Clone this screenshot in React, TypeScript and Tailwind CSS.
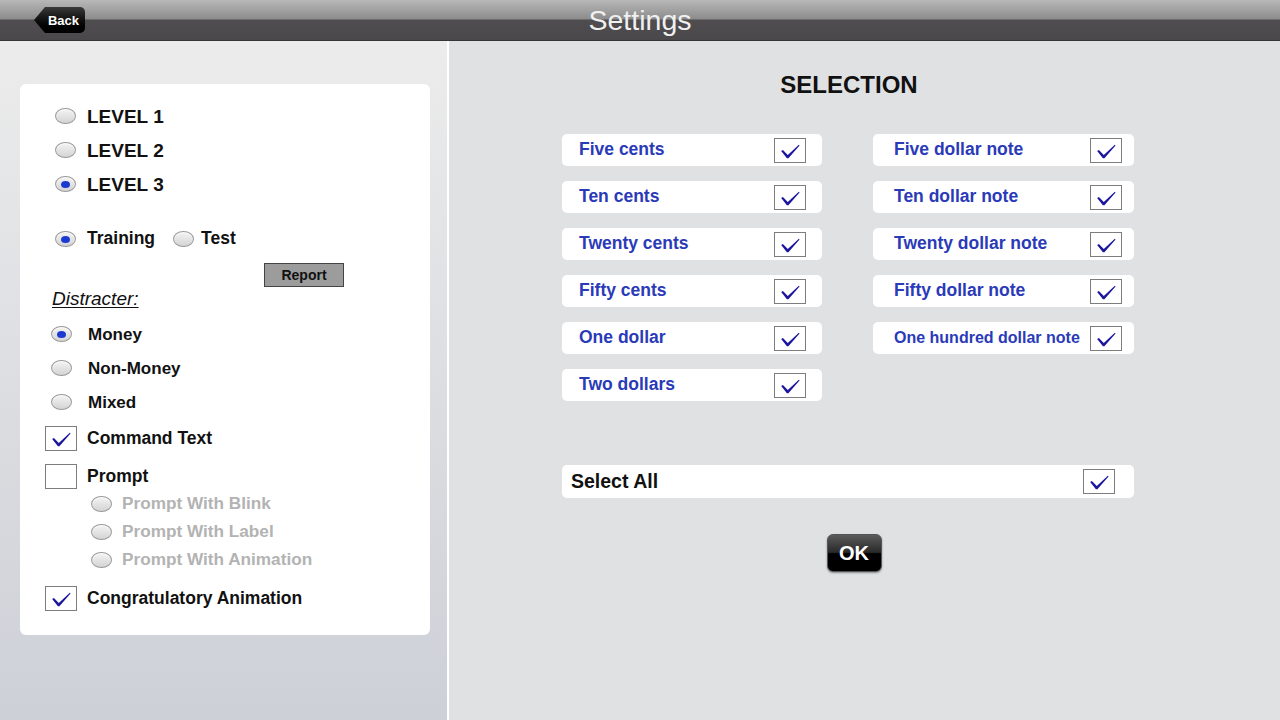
import type { ReactNode } from 'react';

const font = { fontFamily: '"Liberation Sans", Arial, sans-serif' };

const coins = ['Five cents', 'Ten cents', 'Twenty cents', 'Fifty cents', 'One dollar', 'Two dollars'];
const notes = [
  'Five dollar note',
  'Ten dollar note',
  'Twenty dollar note',
  'Fifty dollar note',
  'One hundred dollar note',
];

function Tick() {
  return (
    <svg viewBox="0 0 32 26" className="h-full w-full">
      <path d="M6 13.5 L8 12.5 L13.5 18 L26 6.5 L26.8 7.3 L14.2 21.8 L12.5 21.8 Z" fill="#1c169e" />
    </svg>
  );
}

function CheckBox({ checked }: { checked: boolean }) {
  return (
    <div className="h-[25px] w-[32px] shrink-0 border border-[#7d7d7d] bg-white">
      {checked ? <Tick /> : null}
    </div>
  );
}

function Radio({ selected }: { selected?: boolean }) {
  return (
    <div className="flex h-[16px] w-[21px] shrink-0 items-center justify-center rounded-[50%] border border-[#9a9a9a] bg-gradient-to-b from-[#f4f4f4] to-[#d4d4d4] shadow-[inset_0_1px_1px_rgba(255,255,255,0.9)]">
      {selected ? <div className="h-[7px] w-[9px] rounded-[50%] bg-[#1d3ad0]" /> : null}
    </div>
  );
}

function RadioRow({
  selected,
  children,
  className,
  gap = 'gap-[11px]',
  textClass = 'text-[17px] text-[#111]',
}: {
  selected?: boolean;
  children: ReactNode;
  className?: string;
  gap?: string;
  textClass?: string;
}) {
  return (
    <div className={`flex items-center leading-none ${gap} ${className ?? ''}`}>
      <Radio selected={selected} />
      <span className={`font-bold ${textClass}`}>{children}</span>
    </div>
  );
}

function ItemRow({ label, right, wide }: { label: string; right?: boolean; wide?: boolean }) {
  return (
    <div
      className={`flex h-[32px] items-center justify-between rounded-[5px] bg-white leading-none ${
        right ? 'pl-[21px] pr-[12px]' : 'pl-[17px] pr-[16px]'
      }`}
    >
      <span className={`font-bold text-[#2a3ab8] ${wide ? 'text-[16px]' : 'text-[17.5px]'}`}>{label}</span>
      <CheckBox checked />
    </div>
  );
}

export default function App() {
  return (
    <div className="flex h-[720px] w-[1280px] flex-col overflow-hidden" style={font}>
      {/* Header bar */}
      <header className="relative flex h-[41px] shrink-0 items-center justify-center border-b border-[#353535] bg-[linear-gradient(to_bottom,#b8b8b8_0px,#8c8c8c_19px,#4f4d4f_20px,#4a484a_40px)]">
        <button className="absolute left-[34px] top-[7px] flex h-[26px] w-[51px] items-center justify-end rounded-r-[5px] bg-gradient-to-b from-[#3a3a3a] to-[#000] pr-[6px] text-[13px] font-bold leading-none text-white [clip-path:polygon(11px_0,100%_0,100%_100%,11px_100%,0_50%)]">
          Back
        </button>
        <h1 className="text-[28.5px] leading-none text-[#f0f0f0]">Settings</h1>
      </header>

      <div className="flex flex-1">
        {/* Left pane */}
        <aside className="w-[449px] shrink-0 border-r-2 border-white bg-gradient-to-b from-[#ececec] to-[#cdd0d7] pl-[20px] pt-[43px]">
          <div className="h-[551px] w-[410px] rounded-[6px] bg-white pl-[25px] pt-[15px]">
            <div className="flex flex-col pl-[10px]">
              {['LEVEL 1', 'LEVEL 2', 'LEVEL 3'].map((lvl, i) => (
                <RadioRow key={lvl} selected={i === 2} className="h-[34px]" textClass="text-[19px] text-[#111]">
                  {lvl}
                </RadioRow>
              ))}
            </div>

            <div className="mt-[26px] flex h-[24px] items-center pl-[10px]">
              <RadioRow selected textClass="text-[17.5px] text-[#111]">
                Training
              </RadioRow>
              <RadioRow className="ml-[18px]" gap="gap-[7px]" textClass="text-[17.5px] text-[#111]">
                Test
              </RadioRow>
            </div>

            <div className="mt-[12px] flex pl-[219px]">
              <button className="h-[24px] w-[80px] border border-[#444] bg-[#9c9c9c] text-[14px] font-bold leading-none text-[#111]">
                Report
              </button>
            </div>

            <p className="flex h-[22px] items-center pl-[7px] text-[19px] italic leading-none text-[#111] underline underline-offset-2">
              Distracter:
            </p>

            <div className="mt-[8px] flex flex-col pl-[6px]">
              <RadioRow selected gap="gap-[16px]" className="h-[34px]">
                Money
              </RadioRow>
              <RadioRow gap="gap-[16px]" className="h-[34px]">
                Non-Money
              </RadioRow>
              <RadioRow gap="gap-[16px]" className="h-[34px]">
                Mixed
              </RadioRow>
            </div>

            <div className="mt-[7px] flex items-center gap-[10px] leading-none">
              <CheckBox checked />
              <span className="text-[17.5px] font-bold text-[#111]">Command Text</span>
            </div>

            <div className="mt-[13px] flex items-center gap-[10px] leading-none">
              <CheckBox checked={false} />
              <span className="text-[17.5px] font-bold text-[#111]">Prompt</span>
            </div>

            <div className="mt-[1px] flex flex-col pl-[46px]">
              {['Prompt With Blink', 'Prompt With Label', 'Prompt With Animation'].map((p) => (
                <RadioRow key={p} gap="gap-[10px]" className="h-[28px]" textClass="text-[17.2px] text-[#b3b3b3]">
                  {p}
                </RadioRow>
              ))}
            </div>

            <div className="mt-[12px] flex items-center gap-[10px] leading-none">
              <CheckBox checked />
              <span className="text-[17.5px] font-bold text-[#111]">Congratulatory Animation</span>
            </div>
          </div>
        </aside>

        {/* Right pane */}
        <main className="flex flex-1 flex-col bg-[#e0e1e3] pl-[113px] pt-[32px]">
          <h2 className="w-[572px] pl-[2px] text-center text-[24px] font-bold leading-none text-[#111]">SELECTION</h2>

          <div className="mt-[37px] flex gap-[51px]">
            <div className="flex w-[260px] flex-col gap-[15px]">
              {coins.map((c) => (
                <ItemRow key={c} label={c} />
              ))}
            </div>
            <div className="flex w-[261px] flex-col gap-[15px]">
              {notes.map((n, i) => (
                <ItemRow key={n} label={n} right wide={i === 4} />
              ))}
            </div>
          </div>

          <div className="mt-[64px] flex h-[33px] w-[572px] items-center justify-between rounded-[5px] bg-white pl-[9px] pr-[19px] leading-none">
            <span className="text-[19.5px] font-bold text-[#111]">Select All</span>
            <CheckBox checked />
          </div>

          <div className="mt-[36px] flex w-[572px] justify-center pl-[12px]">
            <button className="h-[38px] w-[55px] rounded-[6px] border border-[#555] bg-[linear-gradient(to_bottom,#5a5a5a_0%,#2a2a2a_48%,#000_52%,#000_100%)] text-[20px] font-bold leading-none text-white shadow-[0_1px_2px_rgba(0,0,0,0.4)]">
              OK
            </button>
          </div>
        </main>
      </div>
    </div>
  );
}
